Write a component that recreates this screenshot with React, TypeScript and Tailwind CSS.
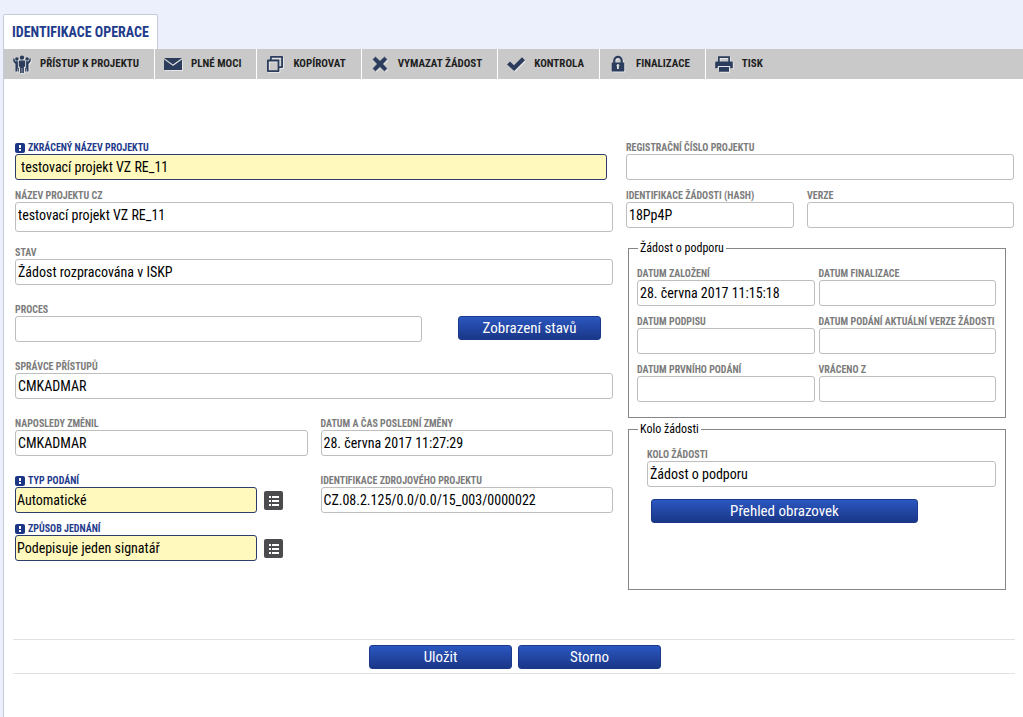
import React, { useId } from "react";

type FieldProps = {
  label: string;
  value?: string;
  required?: boolean;
  className?: string;
  inputClass?: string;
};

function RequiredMark() {
  return (
    <svg viewBox="0 0 10 10" className="size-[10px] shrink-0" aria-hidden="true">
      <rect width="10" height="10" rx="2" fill="#1b3684" />
      <rect x="4" y="2" width="2" height="3" fill="#fff" />
      <rect x="4" y="6" width="2" height="2" fill="#fff" />
    </svg>
  );
}

function Field({ label, value = "", required = false, className = "", inputClass = "h-[26px] px-[2px]" }: FieldProps) {
  const id = useId();
  const tone = required ? "border-[#2c3c6c] bg-[#fff9bd]" : "border-[#bebebe] bg-white";
  return (
    <div className={`flex min-w-0 flex-col ${className}`}>
      <label
        htmlFor={id}
        className={`flex h-3 items-center gap-[3px] text-[10px] leading-3 font-bold whitespace-nowrap ${required ? "text-[#1f3b8c]" : "text-[#7c7c7c]"}`}
      >
        {required && <RequiredMark />}
        {label}
      </label>
      <input
        id={id}
        type="text"
        defaultValue={value}
        className={`w-full rounded-[3px] border text-[14px] text-black outline-none ${tone} ${inputClass}`}
      />
    </div>
  );
}

function BlueButton({ children, className = "" }: { children: React.ReactNode; className?: string }) {
  return (
    <button
      type="button"
      className={`h-6 rounded-[3px] border border-[#1c3a8c] bg-linear-to-b from-[#2b57c0] to-[#1a3788] text-center text-[15px] leading-5 text-white ${className}`}
    >
      {children}
    </button>
  );
}

function ListButton({ label }: { label: string }) {
  return (
    <button type="button" aria-label={label} className="mb-[3px] size-[19px] shrink-0">
      <svg viewBox="0 0 19 19" className="size-full">
        <rect width="19" height="19" rx="2" fill="#4b4a4c" />
        <g fill="#fff">
          <rect x="5" y="5" width="2" height="2" />
          <rect x="8" y="5" width="7" height="2" />
          <rect x="5" y="9" width="2" height="2" />
          <rect x="8" y="9" width="7" height="2" />
          <rect x="5" y="13" width="2" height="2" />
          <rect x="8" y="13" width="7" height="2" />
        </g>
      </svg>
    </button>
  );
}

const icons = {
  people: (
    <>
      <circle cx="9" cy="2.600" r="2.200" />
      <circle cx="3.900" cy="4" r="1.800" />
      <circle cx="14.100" cy="4" r="1.800" />
      <path d="M7 5.400h4q1.200 0 1.200 1.200v5.200h-1.300V18H9.300v-5h-.6v5H7.100v-6.200H5.800V6.600Q5.800 5.400 7 5.400z" />
      <path d="M.2 3.600l1 0 1.200 2.600h2.500v6.600h.9v3.600H4.600v-3h-.5v3H2.500V8.900L.4 6.400zM17.800 3.600l-1 0-1.200 2.600h-2.500v6.600h-.9v3.600h1.200v-3h.5v3h1.600V8.900l2.100-2.500z" />
    </>
  ),
  mail: (
    <>
      <path d="M0 3h18L9 9.600z" />
      <path d="M0 4.400l9 6.700 9-6.700V15H0z" />
    </>
  ),
  copy: (
    <path
      fill="none"
      stroke="#2b3c5c"
      strokeWidth="1.800"
      strokeLinejoin="round"
      d="M4.900 5.500V1.900h11.200v10.200h-3.600M1.900 5.500h10.600v10.600H1.900z"
    />
  ),
  cross: (
    <path d="M4.500 2L9 6.300 13.500 2 16 4.400 11.700 9l4.300 4.600-2.500 2.400L9 11.700 4.500 16 2 13.600 6.300 9 2 4.400z" strokeLinejoin="round" stroke="#2b3c5c" strokeWidth=".6" />
  ),
  check: <path d="M0 9.500l3-3 4 3.700L15 2.300l3 2.900L7.200 15.900z" />,
  lock: (
    <path
      fillRule="evenodd"
      d="M4.200 7.500V5.600a4.800 4.800 0 0 1 9.600 0v1.900h.7q.8 0 .8.800v7.500q0 .8-.8.800h-11q-.8 0-.8-.8V8.300q0-.8.8-.8zM6.400 7.500h5.200V5.600a2.600 2.600 0 0 0-5.200 0zM8 13.900h2v-2.100a1.500 1.500 0 1 0-2 0z"
    />
  ),
  print: (
    <path
      fillRule="evenodd"
      d="M3 1.300h12v5.200h1.600q1.200 0 1.200 1.200v5.500h-2.600v-2.300H2.800v2.300H.2V7.700q0-1.200 1.200-1.200H3zM4.700 3v3.500h8.600V3zM4 12.100h10v4.600H4z"
    />
  ),
};

const actions: { icon: keyof typeof icons; text: string }[] = [
  { icon: "people", text: "PŘÍSTUP K PROJEKTU" },
  { icon: "mail", text: "PLNÉ MOCI" },
  { icon: "copy", text: "KOPÍROVAT" },
  { icon: "cross", text: "VYMAZAT ŽÁDOST" },
  { icon: "check", text: "KONTROLA" },
  { icon: "lock", text: "FINALIZACE" },
  { icon: "print", text: "TISK" },
];

function Toolbar() {
  return (
    <nav className="flex h-[30px] bg-[#c9c9c9]">
      {actions.map((a, i) => (
        <button
          key={a.text}
          type="button"
          className={`flex items-center gap-[9px] pr-[15px] pl-[9px] text-[11px] leading-4 font-bold whitespace-nowrap text-[#1f1f1f] ${i < actions.length - 1 ? "border-r border-white" : ""}`}
        >
          <svg viewBox="0 0 18 18" fill="#2b3c5c" className="size-[18px] drop-shadow-[1px_1px_0_#e6e6e6]" aria-hidden="true">
            {icons[a.icon]}
          </svg>
          {a.text}
        </button>
      ))}
    </nav>
  );
}

export default function App() {
  return (
    <div className="flex min-h-screen flex-col bg-[#ecf0fc] pt-[14px] pl-[3px] font-['Roboto_Condensed','Roboto',sans-serif]">
      <header className="flex">
        <a
          href="#"
          className="flex h-[35px] items-center rounded-t-[2px] border border-b-0 border-[#c5cbdb] bg-white px-2 text-[14px] leading-5 font-bold whitespace-nowrap text-[#1f3b8c]"
        >
          IDENTIFIKACE OPERACE
        </a>
      </header>
      <main className="flex grow flex-col border-l border-[#c5cbdb] bg-white">
        <Toolbar />
        <form className="flex flex-col pt-[63px]">
          <div className="grid grid-cols-[598fr_388fr] gap-x-[13px] pr-[9px] pl-[11px]">
            <div className="flex flex-col gap-[19px]">
              <div className="flex flex-col">
                <Field
                  label="ZKRÁCENÝ NÁZEV PROJEKTU"
                  value="testovací projekt VZ RE_11"
                  required
                  className="mb-[10px] pr-[6px]"
                  inputClass="h-[26px] px-[5px]"
                />
                <Field
                  label="NÁZEV PROJEKTU CZ"
                  value="testovací projekt VZ RE_11"
                  className="-mb-1"
                  inputClass="h-[30px] px-[2px] pb-[4px]"
                />
              </div>
              <Field label="STAV" value="Žádost rozpracována v ISKP" />
              <div className="flex items-end gap-9">
                <Field label="PROCES" className="grow" />
                <BlueButton className="mr-3 mb-[2px] w-[143px]">Zobrazení stavů</BlueButton>
              </div>
              <Field label="SPRÁVCE PŘÍSTUPŮ" value="CMKADMAR" />
              <div className="grid grid-cols-2 gap-x-[13px]">
                <Field label="NAPOSLEDY ZMĚNIL" value="CMKADMAR" />
                <Field label="DATUM A ČAS POSLEDNÍ ZMĚNY" value="28. června 2017 11:27:29" />
              </div>
              <div className="grid grid-cols-2 gap-x-[13px] gap-y-[10px]">
                <div className="flex items-end gap-[7px] pr-[25px]">
                  <Field label="TYP PODÁNÍ" value="Automatické" required className="grow" inputClass="h-[26px] px-px" />
                  <ListButton label="Vybrat typ podání" />
                </div>
                <Field label="IDENTIFIKACE ZDROJOVÉHO PROJEKTU" value="CZ.08.2.125/0.0/0.0/15_003/0000022" />
                <div className="flex items-end gap-[7px] pr-[25px]">
                  <Field label="ZPŮSOB JEDNÁNÍ" value="Podepisuje jeden signatář" required className="grow" inputClass="h-[26px] px-px" />
                  <ListButton label="Vybrat způsob jednání" />
                </div>
              </div>
            </div>

            <div className="flex flex-col">
              <Field label="REGISTRAČNÍ ČÍSLO PROJEKTU" className="mb-[10px]" />
              <div className="mb-3 grid grid-cols-[168fr_207fr] gap-x-[13px]">
                <Field label="IDENTIFIKACE ŽÁDOSTI (HASH)" value="18Pp4P" />
                <Field label="VERZE" />
              </div>
              <fieldset className="mr-2 ml-[2px] min-w-0 border border-[#868686] pr-[9px] pb-[15px] pl-2">
                <legend className="ml-px px-[2px] text-[12px] leading-4 text-black">Žádost o podporu</legend>
                <div className="grid grid-cols-2 gap-x-1 gap-y-[10px] pt-3">
                  <Field label="DATUM ZALOŽENÍ" value="28. června 2017 11:15:18" />
                  <Field label="DATUM FINALIZACE" />
                  <Field label="DATUM PODPISU" />
                  <Field label="DATUM PODÁNÍ AKTUÁLNÍ VERZE ŽÁDOSTI" />
                  <Field label="DATUM PRVNÍHO PODÁNÍ" />
                  <Field label="VRÁCENO Z" />
                </div>
              </fieldset>
              <fieldset className="mt-[3px] mr-2 ml-[2px] min-w-0 border border-[#868686] pr-[9px] pb-[66px] pl-2">
                <legend className="ml-px px-[2px] text-[12px] leading-4 text-black">Kolo žádosti</legend>
                <div className="flex flex-col gap-3 pt-3 pl-[10px]">
                  <Field label="KOLO ŽÁDOSTI" value="Žádost o podporu" />
                  <div className="flex pr-[78px] pl-1">
                    <BlueButton className="grow">Přehled obrazovek</BlueButton>
                  </div>
                </div>
              </fieldset>
            </div>
          </div>

          <div className="mt-[49px] mr-2 ml-[9px] flex h-[35px] items-center justify-center gap-[6px] border-y border-[#e2e2e2] pl-[2px]">
            <BlueButton className="w-[143px]">Uložit</BlueButton>
            <BlueButton className="w-[143px]">Storno</BlueButton>
          </div>
        </form>
      </main>
    </div>
  );
}
